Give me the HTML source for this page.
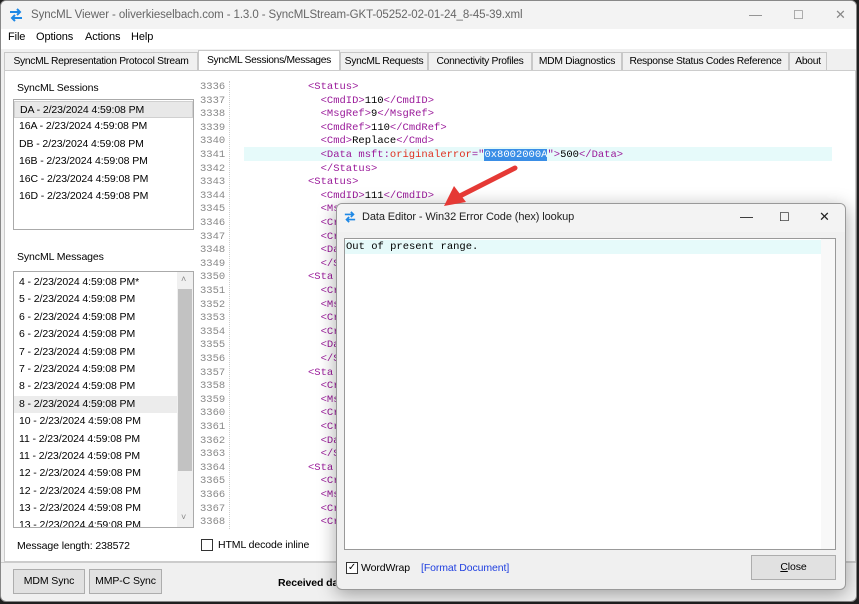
<!DOCTYPE html><html><head><style>
*{margin:0;padding:0;box-sizing:border-box}
body{width:859px;height:604px;overflow:hidden;background:#202020;font-family:"Liberation Sans",sans-serif;font-size:10.5px;letter-spacing:-0.1px;color:#000;position:relative}
.win{position:absolute;left:0;top:0;width:857px;height:602px;background:#f0f0f0;border:1px solid #888;border-radius:6px;overflow:hidden}
.title{position:absolute;left:0;top:0;right:0;height:28px;background:#f3f3f3;color:#666;font-size:11.5px;line-height:28px;padding-left:30px}
.menu{position:absolute;top:28px;left:0;right:0;height:20px;background:#fff;font-size:11px}
.menu span{position:absolute;top:2px}
.tabs{position:absolute;top:51px;left:3px;height:19px}
.tab{position:absolute;top:0;height:19px;background:#f0f0f0;border:1px solid #c8c8c8;font-size:10.3px;letter-spacing:-0.3px;line-height:17px;text-align:center;white-space:nowrap;overflow:hidden}
.page{position:absolute;top:69px;left:3px;width:852px;height:492px;background:#fff;border:1px solid #ccc}
.abs{position:absolute;white-space:nowrap}
.list{position:absolute;background:#fff;border:1px solid #aaa}
.row{height:17.4px;line-height:17.4px;padding-left:5px;font-size:10.5px}
.mono{font-family:"Liberation Mono",monospace;font-size:10.5px;letter-spacing:0}
.ln{position:absolute;left:199px;color:#888;width:28px}
.cl{position:absolute;left:244px;white-space:pre}
.t{color:#9a1a9a}.a{color:#e03020}
.btn{position:absolute;background:#e1e1e1;border:1px solid #adadad;font-size:10.5px;text-align:center}
.dlg{position:absolute;left:336px;top:203px;width:510px;height:387px;background:#f0f0f0;border:1px solid #999;box-shadow:0 4px 18px rgba(0,0,0,.35);border-radius:6px;overflow:hidden}
</style></head><body>
<div class="win">
<div class="title"><svg style="position:absolute;left:8px;top:7px" width="14" height="14" viewBox="0 0 14 14"><path d="M1 4h10M8 1l3 3-3 3M13 10H3M6 7l-3 3 3 3" stroke="#1e88e5" stroke-width="2" fill="none"/></svg>SyncML Viewer - oliverkieselbach.com - 1.3.0 - SyncMLStream-GKT-05252-02-01-24_8-45-39.xml
<span class="abs" style="left:748px;top:0;color:#888;font-size:13px">—</span><span class="abs" style="left:792px;top:0;color:#888;font-size:12px">☐</span><span class="abs" style="left:834px;top:0;color:#888;font-size:13px">✕</span></div>
<div class="menu"><span style="left:7px">File</span><span style="left:35px">Options</span><span style="left:84px">Actions</span><span style="left:130px">Help</span></div>
<div class="tabs">
<div class="tab" style="left:0;width:194px">SyncML Representation Protocol Stream</div>
<div class="tab" style="left:194px;width:142px;top:-2px;height:22px;background:#fff;border-bottom:none;line-height:20px">SyncML Sessions/Messages</div>
<div class="tab" style="left:336px;width:88px">SyncML Requests</div>
<div class="tab" style="left:424px;width:104px">Connectivity Profiles</div>
<div class="tab" style="left:528px;width:90px">MDM Diagnostics</div>
<div class="tab" style="left:618px;width:167px">Response Status Codes Reference</div>
<div class="tab" style="left:785px;width:38px">About</div>
</div>
<div class="page"></div>
<div class="abs" style="left:16px;top:81px">SyncML Sessions</div>
<div class="list" style="left:12px;top:98px;width:181px;height:131px;padding-top:1px">
<div class="row" style="background:#e8e8e8;border:1px solid #d0d0d0">DA - 2/23/2024 4:59:08 PM</div><div class="row">16A - 2/23/2024 4:59:08 PM</div><div class="row">DB - 2/23/2024 4:59:08 PM</div><div class="row">16B - 2/23/2024 4:59:08 PM</div><div class="row">16C - 2/23/2024 4:59:08 PM</div><div class="row">16D - 2/23/2024 4:59:08 PM</div></div>
<div class="abs" style="left:16px;top:250px">SyncML Messages</div>
<div class="list" style="left:12px;top:270px;width:181px;height:257px;overflow:hidden;padding-top:2px">
<div style="position:absolute;right:0;top:0;width:16px;height:256px;background:#f0f0f0"><div style="position:absolute;left:1px;right:1px;top:17px;height:182px;background:#c2c2c2"></div><span class="abs" style="left:4px;top:2px;color:#888;font-size:9px">˄</span><span class="abs" style="left:4px;top:240px;color:#888;font-size:9px">˅</span></div>
<div class="row">4 - 2/23/2024 4:59:08 PM*</div><div class="row">5 - 2/23/2024 4:59:08 PM</div><div class="row">6 - 2/23/2024 4:59:08 PM</div><div class="row">6 - 2/23/2024 4:59:08 PM</div><div class="row">7 - 2/23/2024 4:59:08 PM</div><div class="row">7 - 2/23/2024 4:59:08 PM</div><div class="row">8 - 2/23/2024 4:59:08 PM</div><div class="row" style="background:#ececec;width:164px">8 - 2/23/2024 4:59:08 PM</div><div class="row">10 - 2/23/2024 4:59:08 PM</div><div class="row">11 - 2/23/2024 4:59:08 PM</div><div class="row">11 - 2/23/2024 4:59:08 PM</div><div class="row">12 - 2/23/2024 4:59:08 PM</div><div class="row">12 - 2/23/2024 4:59:08 PM</div><div class="row">13 - 2/23/2024 4:59:08 PM</div><div class="row">13 - 2/23/2024 4:59:08 PM</div></div>
<div class="abs" style="left:16px;top:539px">Message length: 238572</div>
<div class="abs" style="left:200px;top:538px;width:12px;height:12px;border:1px solid #333;background:#fff"></div>
<div class="abs" style="left:217px;top:538px">HTML decode inline</div>
<div class="abs" style="left:0;top:561px;width:857px;height:1px;background:#ccc"></div>
<div class="btn" style="left:12px;top:568px;width:72px;height:25px;line-height:23px">MDM Sync</div>
<div class="btn" style="left:88px;top:568px;width:73px;height:25px;line-height:23px">MMP-C Sync</div>
<div class="abs" style="left:277px;top:576px;font-weight:bold">Received da</div>
<div class="abs" style="left:228px;top:80px;width:0;height:448px;border-left:1px dotted #ccc"></div>
<div class="abs" style="left:243px;top:146px;width:588px;height:14px;background:#e6fafa"></div>
<div class="mono" id="code"></div>
</div>
<div class="dlg">
<div style="height:28px;background:#f3f3f3;font-size:11px;line-height:26px;padding-left:25px;color:#222;position:relative"><svg style="position:absolute;left:7px;top:7px" width="12" height="12" viewBox="0 0 14 14"><path d="M1 4h10M8 1l3 3-3 3M13 10H3M6 7l-3 3 3 3" stroke="#1e88e5" stroke-width="2" fill="none"/></svg>Data Editor - Win32 Error Code (hex) lookup
<span class="abs" style="left:403px;top:0;font-size:13px">—</span><span class="abs" style="left:442px;top:0;font-size:12px">☐</span><span class="abs" style="left:482px;top:0;font-size:13px">✕</span></div>
<div class="abs" style="left:7px;top:34px;width:492px;height:312px;background:#fff;border:1px solid #999"><div class="mono" style="background:#e6fafa;height:14px;line-height:14px;padding-left:1px;margin-top:1px">Out of present range.</div><div style="position:absolute;right:0;top:0;width:14px;height:310px;background:#f8f8f8"></div></div>
<div class="abs" style="left:9px;top:358px;width:12px;height:12px;border:1px solid #333;background:#fff;font-size:10px;line-height:10px;text-align:center">✓</div>
<div class="abs" style="left:24px;top:358px">WordWrap</div>
<div class="abs" style="left:84px;top:358px;color:#2040e0">[Format Document]</div>
<div class="btn" style="left:414px;top:351px;width:85px;height:25px;line-height:23px"><u>C</u>lose</div>
</div>
<svg class="abs" style="left:440px;top:160px" width="80" height="50"><path d="M75 8 L12 40" stroke="#e53935" stroke-width="5" stroke-linecap="round"/><path d="M4 46 L14 26 L26 42 Z" fill="#e53935"/></svg>
<script>
var L=[
[6,'<span class="t">&lt;Status&gt;</span>'],
[8,'<span class="t">&lt;CmdID&gt;</span>110<span class="t">&lt;/CmdID&gt;</span>'],
[8,'<span class="t">&lt;MsgRef&gt;</span>9<span class="t">&lt;/MsgRef&gt;</span>'],
[8,'<span class="t">&lt;CmdRef&gt;</span>110<span class="t">&lt;/CmdRef&gt;</span>'],
[8,'<span class="t">&lt;Cmd&gt;</span>Replace<span class="t">&lt;/Cmd&gt;</span>'],
[8,'<span class="t">&lt;Data msft:</span><span class="a">originalerror</span><span class="t">="</span><span style="background:#3a8ee6;color:#fff">0x8002000A</span><span class="t">"&gt;</span>500<span class="t">&lt;/Data&gt;</span>'],
[8,'<span class="t">&lt;/Status&gt;</span>'],
[6,'<span class="t">&lt;Status&gt;</span>'],
[8,'<span class="t">&lt;CmdID&gt;</span>111<span class="t">&lt;/CmdID&gt;</span>']];
var sub=['&lt;Cr','&lt;Ms','&lt;Cr','&lt;Cr','&lt;Da','&lt;/S'];
var rest=[[8,'&lt;Ms'],[8,'&lt;Cr'],[8,'&lt;Cr'],[8,'&lt;Da'],[8,'&lt;/S']];
for(var k=0;k<4;k++){if(k>0)rest.push([6,'&lt;Sta']);if(k>0)for(var j=0;j<6;j++)rest.push([8,sub[j]]);}
rest.forEach(function(r){L.push([r[0],'<span class="t">'+r[1]+'</span>'])});
var h='';for(var i=0;i<33;i++){var y=80+i*13.6;h+='<div class="ln" style="top:'+y+'px">'+(3336+i)+'</div>';if(L[i])h+='<div class="cl" style="top:'+y+'px;left:'+(269+(L[i][0]-6)*6.3+38)+'px">'+L[i][1]+'</div>';}
document.getElementById('code').innerHTML=h;
</script>
</body></html>
